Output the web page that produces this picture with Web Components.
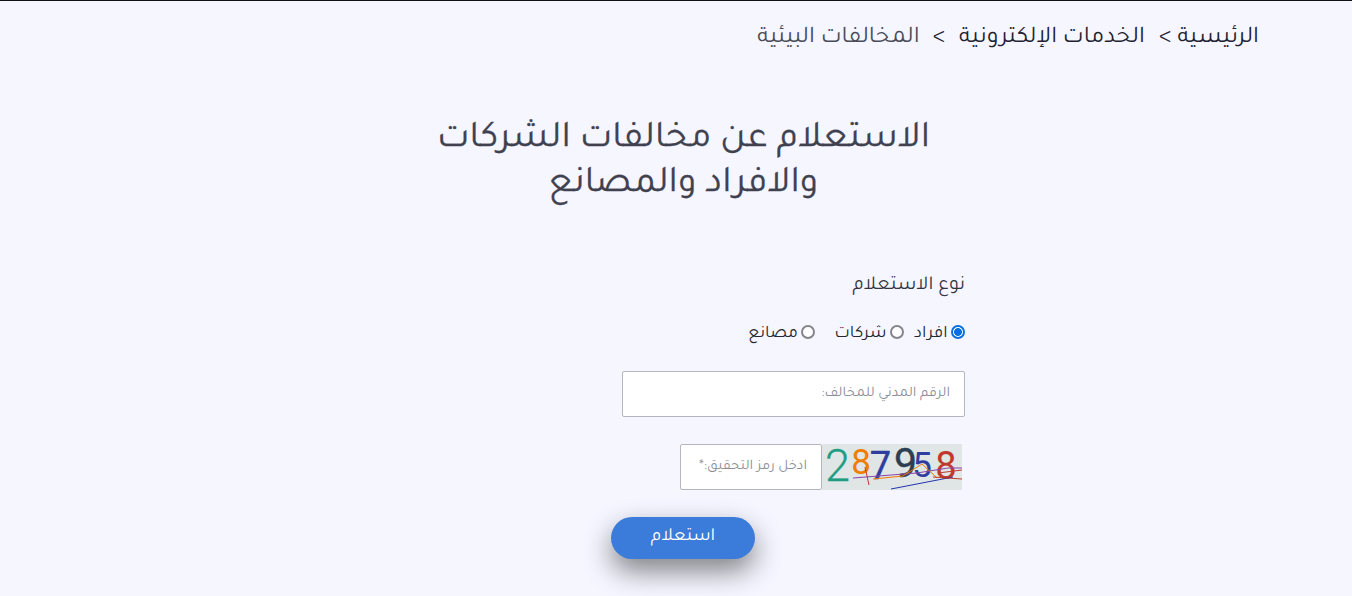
<!DOCTYPE html>
<html lang="ar" dir="rtl">
<head>
<meta charset="utf-8">
<style>
html,body{margin:0;padding:0;height:596px;overflow:hidden}
body{background:#f5f6ff;font-family:Tajawal,"DejaVu Sans",sans-serif;border-top:1px solid #111;box-sizing:border-box}
</style>
</head>
<body>
<env-page></env-page>
<script>
function def(name,css,html){
  customElements.define(name,class extends HTMLElement{
    constructor(){super();const r=this.attachShadow({mode:'open'});r.innerHTML='<style>'+css+'</style>'+html;}
  });
}
def('bread-crumbs',`
:host{display:flex;padding:23px 93px 0 0;height:30px;align-items:center;font-size:24px;color:#1f2230}
.sep{margin-inline:14px 13px}
.sep.first{margin-inline:6px 14px}
.last{color:#4a4c58}
`,`<span>الرئيسية</span><span class="sep first">&gt;</span><span>الخدمات الإلكترونية</span><span class="sep">&gt;</span><span class="last">المخالفات البيئية</span>`);
def('page-title',`
:host{display:block;text-align:center;font-size:37.5px;line-height:45px;color:#3f414f;padding:64px 0 0;width:520px;margin:0 408.5px 0 auto;font-weight:400;-webkit-text-stroke:.3px #3f414f}
`,`<slot></slot>`);
def('radio-opt',`
:host{display:inline-flex;align-items:center;gap:3.5px;font-size:17.6px;color:#25272f}
input{appearance:none;box-sizing:border-box;margin:0;width:14px;height:14px;border:2px solid #85858b;border-radius:50%;background:#fdfdff}
input:checked{border-color:#0a6fe0;background:radial-gradient(circle,#0a6fe0 0 3.6px,#fff 4.2px)}
span{padding-top:4px}
`,`<input type="radio" name="t"><span><slot></slot></span>`);
def('captcha-img',`
:host{display:block;width:140px;height:46px;background:#e0e5e6}
svg{display:block}
`,`<svg width="140" height="46" viewBox="0 0 140 46" direction="ltr">
<g font-family="Roboto" text-anchor="middle" font-weight="400">
<text x="15.5" y="37" fill="#1e9d83" font-size="45" font-weight="300" stroke="#1e9d83" stroke-width=".3">2</text>
<text x="39" y="30" fill="#ef7d00" font-size="35">8</text>
<text x="58.5" y="35" fill="#2f3d9e" font-size="38" stroke="#2f3d9e" stroke-width=".4">7</text>
<text x="83.5" y="33" fill="#2c3e50" font-size="41" stroke="#2c3e50" stroke-width=".4">9</text>
<text x="100" y="33" fill="#2f3d9e" font-size="35">5</text>
<text x="124" y="35" fill="#c0392b" font-size="38">8</text>
</g>
<g fill="none" stroke-width="1">
<path d="M31 34 L95 29 L126 24 L140 24" stroke="#8e44ad"/>
<path d="M51 35 L81 32 L100 20 L115 34" stroke="#ef7d00"/>
<path d="M69 45 L131 33" stroke="#2433b0"/>
<path d="M116 29 L140 26" stroke="#c0392b"/>
<path d="M111 33 L140 35" stroke="#c0392b"/>
<path d="M43 23 L47 41" stroke="#c0392b"/>
</g></svg>`);
def('env-page',`
:host{display:block}
form{width:343px;margin:0 387px 0 0;display:block}
.lbl{font-size:19.8px;color:#33353f;line-height:24px;margin-top:66px}
.radios{display:flex;margin-top:22px;height:24px;align-items:center}
.radios radio-opt:nth-child(1){margin-inline-end:10px}
.radios radio-opt:nth-child(2){margin-inline-end:19px}
input.f{box-sizing:border-box;display:block;border:1px solid #b5b5bb;border-radius:2px;background:#fff;font:14.6px Tajawal,"DejaVu Sans",sans-serif;outline:0;padding:0 14px;height:46px}
input.f::placeholder{color:#8d8f98;opacity:1}
.id{width:343px;margin-top:27px}
.cap{display:flex;margin:27px 3px 0 0}
.code{width:142px}
.btn-row{display:flex;justify-content:center;margin-top:27px;width:144px;margin-right:210px}
button{width:144px;height:42px;border:0;border-radius:21px;background:#3b7bd9;color:#fff;font:18.5px Tajawal,"DejaVu Sans",sans-serif;box-shadow:0 12px 28px rgba(0,0,0,.48);padding:0 0 2px}
`,`<bread-crumbs></bread-crumbs>
<page-title>الاستعلام عن مخالفات الشركات والافراد والمصانع</page-title>
<form onsubmit="return false">
<div class="lbl">نوع الاستعلام</div>
<div class="radios"><radio-opt id="a">افراد</radio-opt><radio-opt>شركات</radio-opt><radio-opt>مصانع</radio-opt></div>
<input class="f id" placeholder="الرقم المدني للمخالف:">
<div class="cap"><captcha-img></captcha-img><input class="f code" placeholder="ادخل رمز التحقيق:*"></div>
<div class="btn-row"><button>استعلام</button></div>
</form>`);
document.querySelector('env-page').shadowRoot.getElementById('a').shadowRoot.querySelector('input').checked=true;
</script>
</body>
</html>
